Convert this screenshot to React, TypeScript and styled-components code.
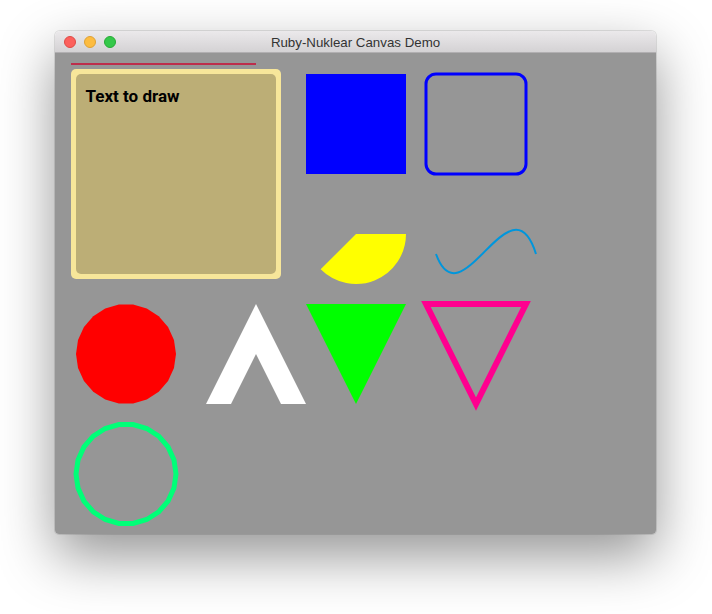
import React from "react";
import styled, { createGlobalStyle } from "styled-components";

const GlobalStyle = createGlobalStyle`
  html, body {
    margin: 0;
    padding: 0;
    background: #ffffff;
  }
  body {
    width: 712px;
    height: 614px;
    overflow: hidden;
    font-family: "Liberation Sans", Arial, sans-serif;
  }
`;

// circle as the polygon nuklear builds (22 segments, starting at angle 0)
const circlePoints = (cx: number, cy: number, r: number, segs = 22) => {
  const pts: string[] = [];
  for (let i = 0; i < segs; i++) {
    const a = (Math.PI * 2 * i) / segs;
    pts.push(`${(cx + Math.cos(a) * r).toFixed(2)},${(cy + Math.sin(a) * r).toFixed(2)}`);
  }
  return pts.join(" ");
};

const arcPath = (cx: number, cy: number, r: number, a0: number, a1: number) => {
  const x0 = cx + Math.cos(a0) * r;
  const y0 = cy + Math.sin(a0) * r;
  const x1 = cx + Math.cos(a1) * r;
  const y1 = cy + Math.sin(a1) * r;
  return `M${cx} ${cy} L${x0} ${y0} A${r} ${r} 0 0 1 ${x1} ${y1} Z`;
};

const App = () => {
  return (
    <>
      <GlobalStyle />
      <Page>
        <Window>
          <TitleBar>
            <Lights>
              <Light color="#fc605c" edge="#de4a45" />
              <Light color="#fdbc40" edge="#dea134" />
              <Light color="#34c84a" edge="#27aa35" />
            </Lights>
            <Title>Ruby-Nuklear Canvas Demo</Title>
            <span />
          </TitleBar>
          <Content>
            <Canvas width="601" height="481" viewBox="0 0 601 481">
              <g transform="translate(1 1)">
                <rect x="15" y="15" width="210" height="210" rx="5" fill="#f7e69a" />
                <rect x="20" y="20" width="200" height="200" rx="5" fill="#bcae76" />
                <text
                  x="29.5"
                  y="47.7"
                  fontFamily="Roboto, 'DejaVu Sans', sans-serif"
                  fontWeight="700"
                  fontSize="17"
                  fill="#000"
                >
                  Text to draw
                </text>
                <rect x="250" y="20" width="100" height="100" fill="#0000ff" />
                <polygon points={circlePoints(70, 300, 50)} fill="#ff0000" />
                <polygon points="250,250 350,250 300,350" fill="#00ff00" />
                <path d={arcPath(300, 180, 50, 0, (Math.PI * 3) / 4)} fill="#ffff00" />
                <polygon
                  points="200,250 250,350 225,350 200,300 175,350 150,350"
                  fill="#ffffff"
                />
                <line x1="15" y1="10" x2="200" y2="10" stroke="#bd2d4b" strokeWidth="2" />
                <rect
                  x="370"
                  y="20"
                  width="100"
                  height="100"
                  rx="10"
                  fill="none"
                  stroke="#0000ff"
                  strokeWidth="3"
                />
                <path
                  d="M380 200 C405 270 455 120 480 200"
                  fill="none"
                  stroke="#0096dc"
                  strokeWidth="2"
                />
                <polygon
                  points={circlePoints(70, 420, 50)}
                  fill="none"
                  stroke="#00ff78"
                  strokeWidth="5"
                />
                <polygon
                  points="370,250 470,250 420,350"
                  fill="none"
                  stroke="#ff008f"
                  strokeWidth="6"
                />
              </g>
            </Canvas>
          </Content>
        </Window>
      </Page>
    </>
  );
};

const Page = styled.div`
  box-sizing: border-box;
  width: 712px;
  height: 614px;
  padding: 31px 0 0 55px;
`;

const Window = styled.div`
  width: 601px;
  height: 503px;
  display: flex;
  flex-direction: column;
  border-radius: 5px 5px 4px 4px;
  overflow: hidden;
  box-shadow: 0 0 0 1px rgba(0, 0, 0, 0.1), 0 22px 55px rgba(0, 0, 0, 0.42);
`;

const TitleBar = styled.div`
  height: 21px;
  flex: none;
  display: grid;
  grid-template-columns: 1fr auto 1fr;
  align-items: center;
  background: linear-gradient(#ebe9eb, #d4d2d4);
  border-bottom: 1px solid #b1afb1;
`;

const Lights = styled.div`
  display: flex;
  align-items: center;
  gap: 8px;
  padding-left: 9px;
`;

const Light = styled.span<{ color: string; edge: string }>`
  box-sizing: border-box;
  width: 12px;
  height: 12px;
  border-radius: 50%;
  background: ${(p) => p.color};
  border: 1px solid ${(p) => p.edge};
`;

const Title = styled.div`
  font-size: 13.3px;
  color: #333333;
  line-height: 21px;
  padding-top: 1px;
`;

const Content = styled.div`
  flex: 1;
  background: #969696;
`;

const Canvas = styled.svg`
  display: block;
`;

export default App;
